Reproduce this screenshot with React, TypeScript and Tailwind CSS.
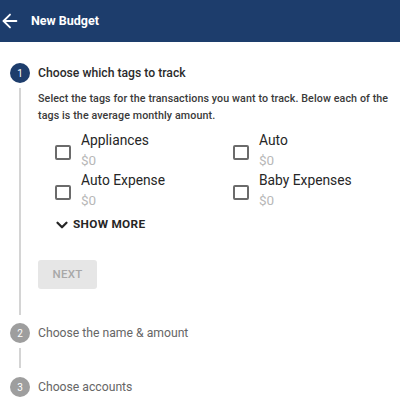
import { ArrowLeft, ChevronDown } from "lucide-react"

const tags = [
    { name: "Appliances", amount: "$0" },
    { name: "Auto", amount: "$0" },
    { name: "Auto Expense", amount: "$0" },
    { name: "Baby Expenses", amount: "$0" },
]

function TagOption({ name, amount }: { name: string; amount: string }) {
    return (
        <div className="flex items-start gap-[10px] h-[40px]">
            <div className="mt-[15px] w-[16px] h-[15px] border-2 border-[#6b6b6b] rounded-[2px] shrink-0" />
            <div className="flex flex-col">
                <span className="text-[13.8px] leading-[20px] text-[#262626]">{name}</span>
                <span className="text-[13.5px] leading-[20px] text-[#b8b8b8]">{amount}</span>
            </div>
        </div>
    )
}

export default function App() {
    return (
        <div className="w-[400px] h-[400px] bg-white overflow-hidden" style={{ fontFamily: "Roboto, 'Liberation Sans', sans-serif" }}>
            {/* Header */}
            <div className="h-[42px] bg-[#1d3d6c] flex items-center">
                <ArrowLeft size={22} strokeWidth={2} className="text-white ml-[-1px]" />
                <span className="ml-[10px] text-white text-[12.5px] font-bold">New Budget</span>
            </div>

            <div className="pl-[10px] pt-[21px]">
                {/* Step 1 */}
                <div className="flex">
                    <div className="flex flex-col items-center w-[20px]">
                        <div className="w-[20px] h-[20px] rounded-full bg-[#1d3d6c] text-white text-[10px] flex items-center justify-center">1</div>
                        <div className="flex-1 w-[2px] bg-[#d4d4d4] mt-[5px] mb-[8px]" />
                    </div>
                    <div className="ml-[8px] flex-1 pr-[4px] pb-[34px]">
                        <div className="h-[20px] flex items-center text-[12.2px] font-medium text-[#2b2b2b]">Choose which tags to track</div>
                        <p className="mt-[7px] text-[10.7px] leading-[17px] font-medium text-[#3a3a3a] tracking-[0.1px]">
                            Select the tags for the transactions you want to track. Below each of the tags is the average monthly amount.
                        </p>
                        <div className="mt-[6px] pl-[17px] grid grid-cols-[178px_1fr]">
                            {tags.map(t => <TagOption key={t.name} {...t} />)}
                        </div>
                        <div className="mt-[5px] ml-[17px] h-[20px] flex items-center gap-[2px] text-[#262626]">
                            <ChevronDown size={18} strokeWidth={3} className="ml-[-2px]" />
                            <span className="text-[11.8px] font-bold tracking-[0.3px]">SHOW MORE</span>
                        </div>
                        <button className="mt-[25px] w-[59px] h-[29px] rounded-[3px] bg-[#e6e6e6] text-[#a8a8a8] text-[11.5px] font-medium tracking-[0.3px]">NEXT</button>
                    </div>
                </div>

                {/* Step 2 */}
                <div className="flex h-[54px]">
                    <div className="flex flex-col items-center w-[20px]">
                        <div className="w-[20px] h-[20px] rounded-full bg-[#9e9e9e] text-white text-[10px] flex items-center justify-center">2</div>
                        <div className="flex-1 w-[2px] bg-[#d4d4d4] mt-[5px] mb-[9px]" />
                    </div>
                    <div className="ml-[8px] h-[20px] flex items-center text-[12.2px] text-[#666666]">Choose the name &amp; amount</div>
                </div>

                {/* Step 3 */}
                <div className="flex">
                    <div className="w-[20px] h-[20px] rounded-full bg-[#9e9e9e] text-white text-[10px] flex items-center justify-center">3</div>
                    <div className="ml-[8px] h-[20px] flex items-center text-[12.2px] text-[#666666]">Choose accounts</div>
                </div>
            </div>
        </div>
    )
}
